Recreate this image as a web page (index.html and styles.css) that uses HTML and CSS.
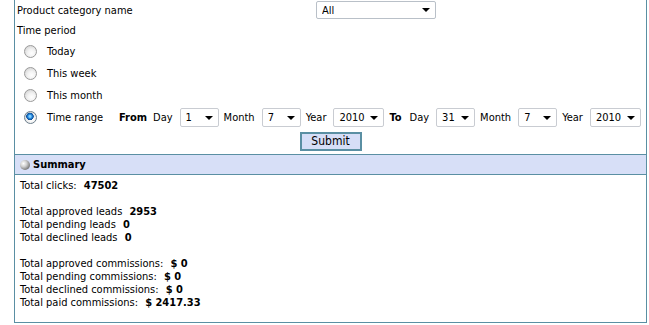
FILE: index.html
```html
<!DOCTYPE html>
<html>
<head>
<meta charset="utf-8">
<link rel="stylesheet" href="styles.css">
</head>
<body>
<div class="panel">
  <form class="filters">
    <div class="row row-cat">
      <span class="cat-label">Product category name</span>
      <span class="sel sel-cat"><select><option>All</option></select></span>
    </div>
    <div class="row row-period">Time period</div>
    <label class="row radio-row"><input type="radio" name="p" class="radio"><span>Today</span></label>
    <label class="row radio-row"><input type="radio" name="p" class="radio"><span>This week</span></label>
    <label class="row radio-row"><input type="radio" name="p" class="radio"><span>This month</span></label>
    <div class="row radio-row range-row">
      <input type="radio" name="p" class="radio" checked>
      <span class="range-label">Time range</span>
      <b class="kw kw-from">From</b>
      <span class="lbl">Day</span>
      <span class="sel sel-s"><select><option>1</option></select></span>
      <span class="lbl">Month</span>
      <span class="sel sel-s"><select><option>7</option></select></span>
      <span class="lbl">Year</span>
      <span class="sel sel-y"><select><option>2010</option></select></span>
      <b class="kw kw-to">To</b>
      <span class="lbl">Day</span>
      <span class="sel sel-s"><select><option>31</option></select></span>
      <span class="lbl">Month</span>
      <span class="sel sel-s"><select><option>7</option></select></span>
      <span class="lbl">Year</span>
      <span class="sel sel-y last"><select><option>2010</option></select></span>
    </div>
    <div class="submit-row"><button type="button" class="submit">Submit</button></div>
  </form>
  <div class="section-head"><span class="bullet"></span><span>Summary</span></div>
  <div class="summary">
    <div class="line">Total clicks: <b>47502</b></div>
    <div class="line gap">Total approved leads <b>2953</b></div>
    <div class="line">Total pending leads <b>0</b></div>
    <div class="line">Total declined leads <b>0</b></div>
    <div class="line gap">Total approved commissions: <b>$ 0</b></div>
    <div class="line">Total pending commissions: <b>$ 0</b></div>
    <div class="line">Total declined commissions: <b>$ 0</b></div>
    <div class="line">Total paid commissions: <b>$ 2417.33</b></div>
  </div>
</div>
</body>
</html>
```

FILE: styles.css
```css
html, body {
  margin: 0;
  padding: 0;
  background: #ffffff;
}
body {
  font-family: "DejaVu Sans Condensed", "DejaVu Sans", sans-serif;
  font-stretch: condensed;
  font-size: 11px;
  color: #000;
}
.panel {
  margin-left: 14px;
  width: 631px;
  height: 322px;
  border-left: 1px solid #5a8fa3;
  border-right: 1px solid #5a8fa3;
  border-bottom: 1px solid #5a8fa3;
  box-shadow: 0 1px 0 #a9c6d1;
  display: flex;
  flex-direction: column;
}
.filters {
  margin: 0;
  display: flex;
  flex-direction: column;
}
.row {
  display: flex;
  align-items: center;
}
.row-cat {
  height: 20px;
  padding-left: 2px;
}
.cat-label {
  width: 299px;
}
.row-period {
  height: 20px;
  padding-left: 2px;
}
.radio-row {
  height: 22px;
  padding-left: 9px;
}
.radio {
  -webkit-appearance: none;
  appearance: none;
  margin: 0 10px 0 0;
  width: 13px;
  height: 13px;
  border-radius: 50%;
  border: 1px solid #9a9a9a;
  background: radial-gradient(circle at 60% 65%, #ffffff 0%, #f2f2f2 40%, #c9c9c9 100%);
  box-sizing: border-box;
  flex: none;
}
.radio:checked {
  border-color: #6d7f8d;
  background:
    radial-gradient(circle at 45% 40%, #7fd0ff 0 1px, #2a8be0 2px, #0b4f9a 3.5px, transparent 4px),
    radial-gradient(circle at 60% 65%, #ffffff 0%, #f2f2f2 40%, #c9c9c9 100%);
}
.range-label {
  width: 72px;
}
.kw {
  font-weight: bold;
}
.kw-from { margin-right: 6px; }
.kw-to { margin-right: 8px; }
.lbl { margin-right: 7px; }
.sel {
  position: relative;
  display: inline-block;
  margin-right: 5px;
}
.sel.last { margin-right: 0; }
.sel select {
  -webkit-appearance: none;
  appearance: none;
  font-family: "DejaVu Sans Condensed", "DejaVu Sans", sans-serif;
  font-stretch: condensed;
  font-size: 11px;
  color: #000;
  background: #fff;
  border: 1px solid #c9ccd2;
  border-radius: 2px;
  height: 19px;
  padding: 0 0 0 5px;
  margin: 0;
  box-sizing: border-box;
  display: block;
}
.sel::after {
  content: "";
  position: absolute;
  right: 6px;
  top: 8px;
  border-left: 4px solid transparent;
  border-right: 4px solid transparent;
  border-top: 4px solid #000;
  pointer-events: none;
}
.sel-cat select {
  width: 120px;
  height: 18px;
  border-color: #b9c0c8;
}
.sel-cat::after { top: 7px; right: 6px; }
.sel-s select { width: 39px; }
.sel-y select { width: 51px; }
.submit-row {
  height: 25px;
  display: flex;
  justify-content: center;
  align-items: flex-start;
  padding-top: 4px;
  box-sizing: border-box;
}
.submit {
  width: 62px;
  height: 19px;
  padding: 0;
  margin: 0;
  background: #d6def7;
  border: 2px solid #5a8fa3;
  font-family: "DejaVu Sans Condensed", "DejaVu Sans", sans-serif;
  font-stretch: condensed;
  font-size: 12px;
  color: #000;
  line-height: 15px;
}
.section-head {
  height: 19px;
  border-top: 1px solid #5a8fa3;
  border-bottom: 1px solid #5a8fa3;
  background: #d7dff7;
  display: flex;
  align-items: center;
  padding-left: 5px;
  font-weight: bold;
  margin-top: 1px;
}
.bullet {
  width: 10px;
  height: 10px;
  border-radius: 50%;
  background: radial-gradient(circle at 35% 35%, #ffffff 0%, #cfcfcf 35%, #6b6b6b 80%, #3d3d3d 100%);
  margin-right: 3px;
  flex: none;
}
.summary {
  padding: 4px 0 0 5px;
}
.line {
  height: 13px;
  line-height: 13px;
  white-space: pre;
}
.line.gap {
  margin-top: 13px;
}
.line b {
  margin-left: 4px;
}
```
